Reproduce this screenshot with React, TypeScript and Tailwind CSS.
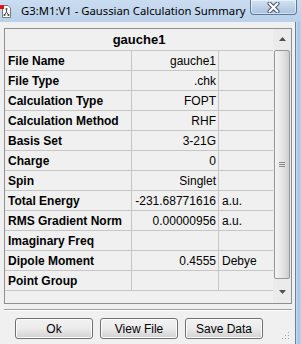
import React from "react";

const rows = [
  { label: "File Name", value: "gauche1", unit: "" },
  { label: "File Type", value: ".chk", unit: "" },
  { label: "Calculation Type", value: "FOPT", unit: "" },
  { label: "Calculation Method", value: "RHF", unit: "" },
  { label: "Basis Set", value: "3-21G", unit: "" },
  { label: "Charge", value: "0", unit: "" },
  { label: "Spin", value: "Singlet", unit: "" },
  { label: "Total Energy", value: "-231.68771616", unit: "a.u." },
  { label: "RMS Gradient Norm", value: "0.00000956", unit: "a.u." },
  { label: "Imaginary Freq", value: "", unit: "" },
  { label: "Dipole Moment", value: "0.4555", unit: "Debye" },
  { label: "Point Group", value: "", unit: "" },
];

function AppIcon() {
  return (
    <svg width="11" height="14" viewBox="0 0 11 14">
      <path d="M2.5 1.5 H8 L10.5 4 V13.5 H2.5 Z" fill="#ffffff" stroke="#7a7a7a" />
      <rect x="0" y="1" width="4" height="4" fill="#e0101a" />
      <path d="M6.5 5 V8 M6.5 8 L4.5 11 M6.5 8 L8.5 11" stroke="#555" strokeWidth="1" fill="none" />
      <circle cx="6.5" cy="5" r="1" fill="#444" />
      <circle cx="4.5" cy="11" r="1" fill="#444" />
      <circle cx="8.5" cy="11" r="1" fill="#444" />
    </svg>
  );
}

function CloseButton() {
  return (
    <div className="w-[47px] h-[15px] self-start ml-auto mr-[4px] rounded-b-[4px] border border-t-0 border-[#5d7899] bg-gradient-to-b from-[#d3e2f2] to-[#a9c2de] flex items-center justify-center shadow-[inset_0_0_0_1px_rgba(255,255,255,0.5)]">
      <svg width="13" height="11" viewBox="0 0 13 11">
        <path d="M2.5 1.5 L10.5 9.5 M10.5 1.5 L2.5 9.5" stroke="#3b4d66" strokeWidth="4" strokeLinecap="round" />
        <path d="M2.5 1.5 L10.5 9.5 M10.5 1.5 L2.5 9.5" stroke="#ffffff" strokeWidth="2.2" strokeLinecap="round" />
      </svg>
    </div>
  );
}

function Arrow({ up }: { up?: boolean }) {
  return (
    <svg width="7" height="4" viewBox="0 0 7 4">
      <path d={up ? "M0 4 L3.5 0 L7 4 Z" : "M0 0 L3.5 4 L7 0 Z"} fill="#505050" />
    </svg>
  );
}

function Scrollbar() {
  return (
    <div className="w-[18px] flex flex-col bg-[#ebebeb]">
      <div className="h-[20px] flex items-center justify-center">
        <Arrow up />
      </div>
      <div className="flex-1 mx-[1px] mt-[1px] mb-[1px] rounded-[2px] border border-[#979797] bg-gradient-to-r from-[#f4f4f4] via-[#e6e6e6] to-[#cfcfcf] flex items-center justify-center">
        <div className="flex flex-col gap-[1px]">
          <div className="w-[6px] h-[1px] bg-[#8a8a8a]" />
          <div className="w-[6px] h-[1px] bg-[#8a8a8a]" />
          <div className="w-[6px] h-[1px] bg-[#8a8a8a]" />
        </div>
      </div>
      <div className="h-[23px] flex items-center justify-center">
        <Arrow />
      </div>
    </div>
  );
}

function Button({ children }: { children: React.ReactNode }) {
  return (
    <div className="w-[78px] h-[21px] rounded-[3px] border border-[#707070] bg-gradient-to-b from-[#f2f2f2] via-[#ebebeb] to-[#d2d2d2] shadow-[inset_0_0_0_1px_#fcfcfc] flex items-center justify-center text-[12px] text-black">
      {children}
    </div>
  );
}

export default function App() {
  return (
    <div className="w-[301px] h-[344px] overflow-hidden flex flex-col bg-[#b9d1ea] font-['Liberation_Sans',Arial,sans-serif]">
      {/* Title bar */}
      <div className="h-[22px] flex items-start bg-gradient-to-b from-[#cadcf0] to-[#bad1ea]">
        <div className="mt-[4px]">
          <AppIcon />
        </div>
        <div className="ml-[10px] mt-[3px] text-[11.3px] leading-[16px] text-black font-['Noto_Sans',sans-serif] whitespace-nowrap">
          G3:M1:V1 - Gaussian Calculation Summary
        </div>
        <CloseButton />
      </div>

      <div className="flex-1 flex">
        {/* Client area */}
        <div className="relative w-[295px] bg-[#f0f0f0] flex flex-col pl-[4px] pt-[6px]">
          <div className="w-[288px] h-[276px] border border-[#8e8f8f] flex">
            <div className="w-[268px] flex flex-col">
              <div className="h-[22px] border-b border-[#c6c6c6] flex items-center justify-center text-[13px] font-bold text-black">
                gauche1
              </div>
              {rows.map((r) => (
                <div key={r.label} className="h-[20px] border-b border-[#c6c6c6] flex text-black">
                  <div className="w-[127px] border-r border-[#c6c6c6] pl-[3px] flex items-center text-[12px] font-bold whitespace-nowrap">
                    {r.label}
                  </div>
                  <div className="w-[87px] border-r border-[#c6c6c6] pr-[2px] flex items-center justify-end text-[12px] whitespace-nowrap">
                    {r.value}
                  </div>
                  <div className="w-[54px] pl-[3px] flex items-center text-[12px] whitespace-nowrap">
                    {r.unit}
                  </div>
                </div>
              ))}
            </div>
            <Scrollbar />
          </div>

          <div className="w-[288px] mt-[5px] border-t border-[#a0a0a0] border-b border-b-white" />

          <div className="flex gap-[7px] pl-[11px] mt-[7px]">
            <Button>Ok</Button>
            <Button>View File</Button>
            <Button>Save Data</Button>
          </div>

          {/* size grip */}
          <div className="absolute right-[5px] bottom-[4px] w-[9px] h-[9px]">
            <svg width="9" height="9" viewBox="0 0 9 9">
              {[
                [7, 1],
                [4, 4],
                [7, 4],
                [1, 7],
                [4, 7],
                [7, 7],
              ].map(([x, y], i) => (
                <rect key={i} x={x} y={y} width="1" height="1" fill="#a0a0a0" />
              ))}
            </svg>
          </div>
        </div>

        {/* Right frame */}
        <div className="flex-1 border-l border-[#6f819a] bg-gradient-to-r from-[#c9dbef] via-[#a9c3e2] to-[#bcd2ea]" />
      </div>
    </div>
  );
}
